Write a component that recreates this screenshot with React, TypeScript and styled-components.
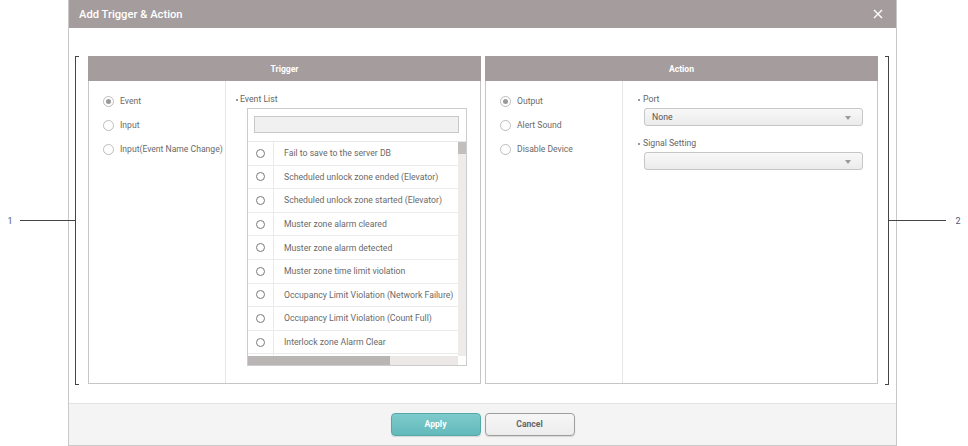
import React from "react";
import styled, { createGlobalStyle } from "styled-components";

const GlobalStyle = createGlobalStyle`
  html, body {
    margin: 0;
    padding: 0;
    background: #ffffff;
  }
  body {
    font-family: Roboto, "Liberation Sans", sans-serif;
    color: #666666;
  }
  * {
    box-sizing: border-box;
  }
`;

const triggerTypes = [
  { label: "Event", checked: true },
  { label: "Input", checked: false },
  { label: "Input(Event Name Change)", checked: false },
];

const actionTypes = [
  { label: "Output", checked: true },
  { label: "Alert Sound", checked: false },
  { label: "Disable Device", checked: false },
];

const events = [
  "Fail to save to the server DB",
  "Scheduled unlock zone ended (Elevator)",
  "Scheduled unlock zone started (Elevator)",
  "Muster zone alarm cleared",
  "Muster zone alarm detected",
  "Muster zone time limit violation",
  "Occupancy Limit Violation (Network Failure)",
  "Occupancy Limit Violation (Count Full)",
  "Interlock zone Alarm Clear",
];

const App: React.FC = () => {
  return (
    <>
      <GlobalStyle />
      <Page>
        <Modal>
          <Header>
            <Title>Add Trigger &amp; Action</Title>
            <CloseButton aria-label="close">
              <svg width="10" height="10" viewBox="0 0 10 10">
                <path d="M1 1 L9 9 M9 1 L1 9" stroke="#ffffff" strokeWidth="1.4" />
              </svg>
            </CloseButton>
          </Header>

          <Body>
            <Panel>
              <PanelHeader>Trigger</PanelHeader>
              <PanelBody>
                <OptionColumn>
                  {triggerTypes.map((t) => (
                    <Option key={t.label}>
                      <Radio checked={t.checked} />
                      {t.label}
                    </Option>
                  ))}
                </OptionColumn>
                <DetailColumn>
                  <FieldLabel $indent={11}>Event List</FieldLabel>
                  <ListBox>
                    <SearchRow>
                      <SearchInput />
                    </SearchRow>
                    <ListArea>
                      {events.map((e) => (
                        <EventRow key={e}>
                          <EventCheck>
                            <SmallRadio />
                          </EventCheck>
                          <EventText>{e}</EventText>
                        </EventRow>
                      ))}
                      <EventRow>
                        <EventCheck />
                      </EventRow>
                    </ListArea>
                    <VScroll>
                      <VThumb />
                    </VScroll>
                    <HScroll>
                      <HThumb style={{ width: `${(143 / 211) * 100}%` }} />
                    </HScroll>
                    <Corner />
                  </ListBox>
                </DetailColumn>
              </PanelBody>
            </Panel>

            <Panel>
              <PanelHeader>Action</PanelHeader>
              <PanelBody>
                <OptionColumn>
                  {actionTypes.map((t) => (
                    <Option key={t.label}>
                      <Radio checked={t.checked} />
                      {t.label}
                    </Option>
                  ))}
                </OptionColumn>
                <DetailColumn>
                  <FieldLabel $indent={6}>Port</FieldLabel>
                  <Select>
                    <span>None</span>
                    <Caret />
                  </Select>
                  <FieldLabel $indent={6} $top={11}>
                    Signal Setting
                  </FieldLabel>
                  <Select>
                    <span />
                    <Caret />
                  </Select>
                </DetailColumn>
              </PanelBody>
            </Panel>
          </Body>

          <Footer>
            <Button $primary>Apply</Button>
            <Button>Cancel</Button>
          </Footer>
        </Modal>

        <Annotation $side="left">
          <Num>1</Num>
          <Leader $width={55} />
          <Bracket $side="left" />
        </Annotation>
        <Annotation $side="right">
          <Bracket $side="right" />
          <Leader $width={57} />
          <Num>2</Num>
        </Annotation>
      </Page>
    </>
  );
};

const Page = styled.div`
  position: relative;
  width: 968px;
  height: 446px;
  padding-left: 68px;
  display: flex;
`;

const Modal = styled.div`
  width: 829px;
  height: 446px;
  display: flex;
  flex-direction: column;
  border: 1px solid #c9c9c9;
  border-top: none;
  background: #ffffff;
`;

const Header = styled.div`
  height: 28px;
  flex-shrink: 0;
  background: #a59c9d;
  display: flex;
  align-items: center;
  justify-content: space-between;
  padding: 1px 13px 0 10px;
`;

const Title = styled.div`
  color: #ffffff;
  font-size: 11.2px;
  font-weight: 500;
`;

const CloseButton = styled.div`
  display: flex;
  align-items: center;
  margin-top: -2px;
`;

const Body = styled.div`
  flex: 1;
  display: flex;
  gap: 4px;
  padding: 28px 18px 19px 19px;
`;

const Panel = styled.div`
  width: 393px;
  height: 328px;
  display: flex;
  flex-direction: column;
`;

const PanelHeader = styled.div`
  height: 25px;
  flex-shrink: 0;
  background: #a59c9d;
  color: #ffffff;
  font-size: 8.6px;
  font-weight: 700;
  display: flex;
  align-items: center;
  justify-content: center;
`;

const PanelBody = styled.div`
  flex: 1;
  display: flex;
  border: 1px solid #c6c6c6;
  border-top: none;
`;

const OptionColumn = styled.div`
  width: 137px;
  flex-shrink: 0;
  border-right: 1px solid #e6e6e6;
  padding: 8px 0 0 14px;
  display: flex;
  flex-direction: column;
`;

const Option = styled.div`
  height: 24px;
  display: flex;
  align-items: center;
  gap: 6px;
  font-size: 8.6px;
  color: #6a6a6a;
`;

const Radio = styled.span<{ checked?: boolean }>`
  width: 11px;
  height: 11px;
  border-radius: 50%;
  border: 1px solid #bdbdbd;
  background: #ffffff;
  display: flex;
  align-items: center;
  justify-content: center;
  flex-shrink: 0;

  &::after {
    content: "";
    width: 5px;
    height: 5px;
    border-radius: 50%;
    background: #9a9a9a;
    display: ${(p) => (p.checked ? "block" : "none")};
  }
`;

const DetailColumn = styled.div`
  flex: 1;
  padding: 12px 0 0 21px;
  display: flex;
  flex-direction: column;
`;

const FieldLabel = styled.div<{ $indent: number; $top?: number }>`
  position: relative;
  height: 12px;
  line-height: 12px;
  font-size: 8.7px;
  color: #666666;
  margin-top: ${(p) => p.$top ?? 0}px;
  margin-bottom: 3px;
  margin-left: ${(p) => (p.$indent === 11 ? -7 : -1)}px;

  &::before {
    content: "";
    position: absolute;
    left: ${(p) => -(p.$indent === 11 ? 4 : 5)}px;
    top: 6px;
    width: 2px;
    height: 2px;
    border-radius: 50%;
    background: #777777;
  }
`;

const ListBox = styled.div`
  width: 220px;
  height: 258px;
  border: 1px solid #cccccc;
  display: grid;
  grid-template-columns: 1fr 8px;
  grid-template-rows: 33px 1fr 9px;
  overflow: hidden;
`;

const SearchRow = styled.div`
  grid-column: 1 / span 2;
  padding: 7px 7px 8px 6px;
  border-bottom: 1px solid #e8e8e8;
`;

const SearchInput = styled.div`
  height: 17px;
  background: #f0f0f0;
  border: 1px solid #c8c8c8;
`;

const ListArea = styled.div`
  overflow: hidden;
`;

const EventRow = styled.div`
  height: 23.6px;
  display: flex;
  border-bottom: 1px solid #ebebeb;
`;

const EventCheck = styled.div`
  width: 26px;
  flex-shrink: 0;
  border-right: 1px solid #ebebeb;
  display: flex;
  align-items: center;
  justify-content: center;
`;

const SmallRadio = styled.span`
  width: 9px;
  height: 9px;
  border-radius: 50%;
  border: 1px solid #7a7a7a;
  background: #ffffff;
`;

const EventText = styled.div`
  display: flex;
  align-items: center;
  padding-left: 10px;
  font-size: 8.7px;
  color: #6a6a6a;
  white-space: nowrap;
`;

const VScroll = styled.div`
  background: #eeebeb;
`;

const VThumb = styled.div`
  height: 12px;
  background: #c2bebe;
`;

const HScroll = styled.div`
  background: #ece8e8;
`;

const HThumb = styled.div`
  height: 100%;
  background: #b9b5b5;
`;

const Corner = styled.div`
  background: #ffffff;
`;

const Select = styled.div`
  width: 219px;
  height: 18px;
  border: 1px solid #c6c6c6;
  border-radius: 3px;
  background: linear-gradient(#f8f8f8, #ebebeb);
  display: flex;
  align-items: center;
  justify-content: space-between;
  padding: 0 11px 0 7px;
  font-size: 8.7px;
  color: #555555;
`;

const Caret = styled.span`
  width: 0;
  height: 0;
  border-left: 3px solid transparent;
  border-right: 3px solid transparent;
  border-top: 4px solid #9a9a9a;
  margin-top: 1px;
`;

const Footer = styled.div`
  height: 42px;
  flex-shrink: 0;
  background: #f4f4f4;
  border-top: 1px solid #e3e3e3;
  display: flex;
  align-items: center;
  justify-content: center;
  gap: 4px;
  padding-bottom: 1px;
`;

const Button = styled.div<{ $primary?: boolean }>`
  width: 90px;
  height: 23px;
  border-radius: 4px;
  display: flex;
  align-items: center;
  justify-content: center;
  font-size: 8.6px;
  font-weight: 700;
  color: ${(p) => (p.$primary ? "#ffffff" : "#666666")};
  background: ${(p) =>
    p.$primary ? "linear-gradient(#7ecbcc, #63b9ba)" : "linear-gradient(#f7f7f7, #ececec)"};
  border: 1px solid ${(p) => (p.$primary ? "#55a8a9" : "#9d9d9d")};
  box-shadow: 0 1px 1px rgba(0, 0, 0, 0.12);
`;

const Annotation = styled.div<{ $side: "left" | "right" }>`
  position: absolute;
  top: 56px;
  height: 329px;
  left: ${(p) => (p.$side === "left" ? "5px" : "885px")};
  display: flex;
  align-items: center;
`;

const Num = styled.div`
  width: 10px;
  text-align: center;
  font-size: 9px;
  color: #4d5a7a;
  margin: 0 5px 0 0;

  &:last-child {
    margin: 0 0 0 7px;
  }
`;

const Leader = styled.div<{ $width: number }>`
  width: ${(p) => p.$width}px;
  height: 1px;
  background: #444444;
`;

const Bracket = styled.div<{ $side: "left" | "right" }>`
  align-self: stretch;
  width: 4px;
  border: 1px solid #444444;
  ${(p) => (p.$side === "left" ? "border-right: none;" : "border-left: none;")}
`;

export default App;
